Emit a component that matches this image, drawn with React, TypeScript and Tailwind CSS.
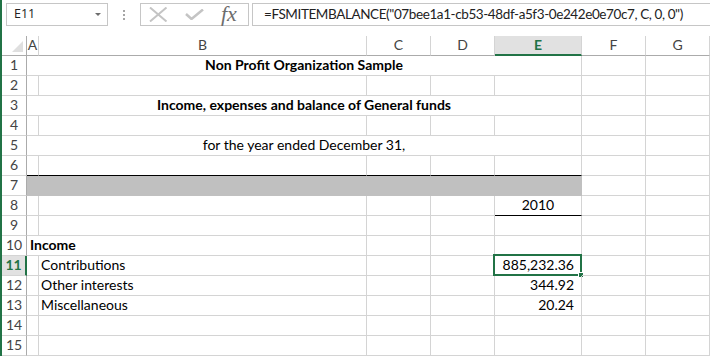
import { ReactNode } from 'react';

const GRID = 'border-r border-b border-[#d4d4d4]';

function Cell({ className = '', children }: { className?: string; children?: ReactNode }) {
  return (
    <div className={`relative flex items-end leading-[19px] pb-[1px] whitespace-nowrap ${className}`}>
      {children}
    </div>
  );
}

function RowHead({ n, active }: { n: number; active?: boolean }) {
  return (
    <div
      className={`flex items-end justify-center leading-[19px] pb-[1px] border-b border-[#d4d4d4] ${
        active
          ? 'bg-[#e1e1e1] text-[#217346] font-bold border-r-2 border-r-[#217346]'
          : 'text-[#444] border-r border-r-[#ababab]'
      }`}
    >
      {n}
    </div>
  );
}

function Blank({ cols }: { cols: number }) {
  return (
    <>
      {Array.from({ length: cols }).map((_, i) => (
        <Cell key={i} className={GRID} />
      ))}
    </>
  );
}

export default function App() {
  return (
    <div className="w-[710px] h-[356px] bg-white overflow-hidden border-l-2 border-[#217346] font-['Lato','Liberation_Sans',sans-serif] text-[14px] text-black">
      {/* barre de formule */}
      <div className="h-[36px] flex items-start pt-[3px] pl-[4px]">
        <div className="w-[102px] h-[23px] border border-[#c6c6c6] flex items-center justify-between pl-[7px] pr-[6px] font-['Open_Sans',sans-serif] text-[12.5px] text-[#222]">
          <span>E11</span>
          <svg width="6" height="3" viewBox="0 0 6 3">
            <path d="M0 0 L6 0 L3 3 Z" fill="#6d6d6d" />
          </svg>
        </div>
        <div className="w-[32px] h-[23px] flex flex-col items-center justify-center gap-[2px]">
          <span className="w-[2px] h-[2px] bg-[#a6a6a6]" />
          <span className="w-[2px] h-[2px] bg-[#a6a6a6]" />
          <span className="w-[2px] h-[2px] bg-[#a6a6a6]" />
        </div>
        <div className="w-[109px] h-[23px] border border-[#c6c6c6] flex items-center pl-[8px] gap-[17px]">
          <svg width="19" height="15" viewBox="0 0 19 15">
            <path d="M1 0.5 L17.5 14.5 M17.5 0.5 L1 14.5" stroke="#c4c4c4" strokeWidth="2" fill="none" />
          </svg>
          <svg width="19" height="11" viewBox="0 0 19 11">
            <path d="M1 5 L6.5 10 L18 0.5" stroke="#c4c4c4" strokeWidth="2.5" fill="none" />
          </svg>
          <span className="font-['Liberation_Serif',serif] italic text-[22px] leading-none text-[#6d6d6d] -mt-[2px]">
            fx
          </span>
        </div>
        <div className="ml-[3px] flex-1 min-w-0 h-[23px] border border-r-0 border-[#c6c6c6] flex items-center pl-[11px] text-[13.5px] tracking-[-0.4px] text-[#222] whitespace-nowrap overflow-hidden">
          =FSMITEMBALANCE("07bee1a1-cb53-48df-a5f3-0e242e0e70c7, C, 0, 0")
        </div>
      </div>

      {/* feuille */}
      <div className="grid grid-cols-[25px_12px_328px_64px_64px_87px_64px_64px] auto-rows-[20px]">
        {/* entetes de colonnes */}
        <div className="relative border-r border-b border-[#ababab]">
          <svg className="absolute right-[3px] bottom-[3px]" width="11" height="11" viewBox="0 0 11 11">
            <path d="M11 0 L11 11 L0 11 Z" fill="#dfdfdf" />
          </svg>
        </div>
        {['A', 'B', 'C', 'D'].map((c) => (
          <div key={c} className="flex items-end justify-center leading-[19px] pb-[1px] text-[#444] border-r border-[#d4d4d4] border-b border-b-[#ababab]">
            {c}
          </div>
        ))}
        <div className="flex items-end justify-center leading-[18px] bg-[#e1e1e1] text-[#217346] font-bold border-r border-[#d4d4d4] border-b-2 border-b-[#217346]">
          E
        </div>
        {['F', 'G'].map((c) => (
          <div key={c} className="flex items-end justify-center leading-[19px] pb-[1px] text-[#444] border-r border-[#d4d4d4] border-b border-b-[#ababab]">
            {c}
          </div>
        ))}

        {/* 1 */}
        <RowHead n={1} />
        <Cell className={`col-span-5 justify-center font-bold ${GRID}`}>Non Profit Organization Sample</Cell>
        <Blank cols={2} />

        {/* 2 */}
        <RowHead n={2} />
        <Blank cols={7} />

        {/* 3 */}
        <RowHead n={3} />
        <Cell className={`col-span-5 justify-center font-bold ${GRID}`}>
          Income, expenses and balance of General funds
        </Cell>
        <Blank cols={2} />

        {/* 4 */}
        <RowHead n={4} />
        <Blank cols={7} />

        {/* 5 */}
        <RowHead n={5} />
        <Cell className={`col-span-5 justify-center ${GRID}`}>for the year ended December 31,</Cell>
        <Blank cols={2} />

        {/* 6 */}
        <RowHead n={6} />
        {[0, 1, 2, 3, 4].map((i) => (
          <Cell key={i} className="border-r border-[#d4d4d4] border-b border-b-black" />
        ))}
        <Blank cols={2} />

        {/* 7 */}
        <RowHead n={7} />
        <Cell className="col-span-5 bg-[#c0c0c0]" />
        <Blank cols={2} />

        {/* 8 */}
        <RowHead n={8} />
        <Blank cols={4} />
        <Cell className="justify-center border-r border-[#d4d4d4] border-b border-b-black">2010</Cell>
        <Blank cols={2} />

        {/* 9 */}
        <RowHead n={9} />
        <Blank cols={7} />

        {/* 10 */}
        <RowHead n={10} />
        <Cell className={`col-span-2 pl-[3px] font-bold ${GRID}`}>Income</Cell>
        <Blank cols={5} />

        {/* 11 */}
        <RowHead n={11} active />
        <Cell className={GRID} />
        <Cell className={`pl-[2px] ${GRID}`}>Contributions</Cell>
        <Blank cols={2} />
        <Cell className={`justify-end pr-[7px] ${GRID}`}>
          885,232.36
          <div className="absolute -left-[2px] -top-[2px] -right-[1px] -bottom-[1px] border-2 border-[#217346]" />
          <div className="absolute -right-[3px] -bottom-[3px] w-[6px] h-[6px] bg-[#217346] border border-white" />
        </Cell>
        <Blank cols={2} />

        {/* 12 */}
        <RowHead n={12} />
        <Cell className={GRID} />
        <Cell className={`pl-[2px] ${GRID}`}>Other interests</Cell>
        <Blank cols={2} />
        <Cell className={`justify-end pr-[7px] ${GRID}`}>344.92</Cell>
        <Blank cols={2} />

        {/* 13 */}
        <RowHead n={13} />
        <Cell className={GRID} />
        <Cell className={`pl-[2px] ${GRID}`}>Miscellaneous</Cell>
        <Blank cols={2} />
        <Cell className={`justify-end pr-[7px] ${GRID}`}>20.24</Cell>
        <Blank cols={2} />

        {/* 14 - 15 */}
        <RowHead n={14} />
        <Blank cols={7} />
        <RowHead n={15} />
        <Blank cols={7} />
      </div>
    </div>
  );
}
